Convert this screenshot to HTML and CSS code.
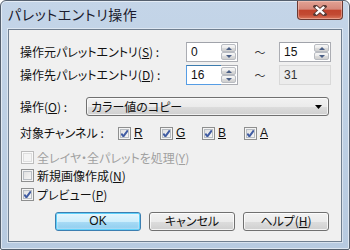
FILE: index.html
```html
<!DOCTYPE html>
<html lang="ja">
<head>
<meta charset="utf-8">
<link rel="stylesheet" href="styles.css">
</head>
<body>
<div class="window">
  <div class="titlebar">
    <span class="title">パレットエントリ操作</span>
    <div class="close">
      <svg width="14" height="11" viewBox="0 0 14 11"><path d="M2.5 1.5 L11.5 9.5 M11.5 1.5 L2.5 9.5" stroke="#5a3b36" stroke-width="4.2" stroke-linecap="square" fill="none"/><path d="M2.8 1.8 L11.2 9.2 M11.2 1.8 L2.8 9.2" stroke="#ffffff" stroke-width="2.4" fill="none"/></svg>
    </div>
  </div>
  <div class="client">
    <div class="range-grid">
      <span class="label">操作元パレットエントリ(<u>S</u>) :</span>
      <div class="spin">
        <div class="edit">0</div>
        <div class="updown"><span class="ud-btn"><i class="tri-up"></i></span><span class="ud-btn"><i class="tri-down"></i></span></div>
      </div>
      <span class="tilde">～</span>
      <div class="spin">
        <div class="edit">15</div>
        <div class="updown"><span class="ud-btn"><i class="tri-up"></i></span><span class="ud-btn"><i class="tri-down"></i></span></div>
      </div>
      <span class="label">操作先パレットエントリ(<u>D</u>) :</span>
      <div class="spin">
        <div class="edit focus">16</div>
        <div class="updown"><span class="ud-btn"><i class="tri-up"></i></span><span class="ud-btn"><i class="tri-down"></i></span></div>
      </div>
      <span class="tilde">～</span>
      <div class="edit readonly">31</div>
    </div>

    <div class="op-row">
      <span class="label">操作(<u>O</u>) :</span>
      <div class="combo">
        <span>カラー値のコピー</span>
        <svg width="7" height="4" viewBox="0 0 7 4"><path d="M0 0 H7 L3.5 4 Z" fill="#000"/></svg>
      </div>
    </div>

    <div class="channel-row">
      <span class="label">対象チャンネル :</span>
      <div class="channels">
        <span class="chk-item"><span class="cb checked"></span><u>R</u></span>
        <span class="chk-item"><span class="cb checked"></span><u>G</u></span>
        <span class="chk-item"><span class="cb checked"></span><u>B</u></span>
        <span class="chk-item"><span class="cb checked"></span><u>A</u></span>
      </div>
    </div>

    <div class="options">
      <div class="opt disabled"><span class="cb"></span><span>全レイヤ・全パレットを処理(<u>Y</u>)</span></div>
      <div class="opt"><span class="cb"></span><span>新規画像作成(<u>N</u>)</span></div>
      <div class="opt"><span class="cb checked"></span><span>プレビュー(<u>P</u>)</span></div>
    </div>

    <div class="buttons">
      <div class="btn default">OK</div>
      <div class="btn"><span>キャンセル</span></div>
      <div class="btn"><span>ヘルプ(<u>H</u>)</span></div>
    </div>
  </div>
</div>
</body>
</html>
```

FILE: styles.css
```css
html, body {
  margin: 0;
  padding: 0;
  background: #ffffff;
}

body {
  font-family: "Noto Sans CJK JP", "Noto Sans", sans-serif;
  font-size: 12px;
  color: #111;
  font-feature-settings: "palt" 1;
}

u {
  text-decoration: underline;
  text-underline-offset: 1px;
}

.window {
  width: 350px;
  height: 250px;
  box-sizing: border-box;
  border: 1px solid #55606e;
  border-radius: 6px 6px 2px 2px;
  background: linear-gradient(#c4d5e8, #bed0e4 45%, #b7cae0);
  box-shadow: inset 0 0 0 1px rgba(255, 255, 255, 0.55);
  display: flex;
  flex-direction: column;
  overflow: hidden;
}

.titlebar {
  height: 28px;
  display: flex;
  align-items: flex-start;
  flex-shrink: 0;
}

.title {
  padding: 4px 0 0 7px;
  font-size: 14px;
  line-height: 19px;
  color: #1b1b2e;
  letter-spacing: 0.6px;
}

.close {
  margin-left: auto;
  margin-right: 6px;
  width: 46px;
  height: 19px;
  box-sizing: border-box;
  border: 1px solid #6b3a33;
  border-top: none;
  border-radius: 0 0 4px 4px;
  background: linear-gradient(#e2a294 0%, #d6887a 45%, #c1432c 52%, #c24a33 75%, #d9765c 100%);
  box-shadow: inset 0 0 0 1px rgba(255, 210, 200, 0.45);
  display: flex;
  align-items: center;
  justify-content: center;
}

.client {
  margin: 0 7px;
  width: 334px;
  height: 213px;
  box-sizing: border-box;
  border: 1px solid #707f90;
  box-shadow: 0 0 0 1px rgba(255, 255, 255, 0.45);
  background: #f0f0f0;
  display: flex;
  flex-direction: column;
}

.label {
  white-space: nowrap;
  line-height: 16px;
}

/* range rows */
.range-grid {
  margin-top: 12px;
  padding-left: 11px;
  display: grid;
  grid-template-columns: 166px 52px 41px 52px;
  grid-auto-rows: 20px;
  row-gap: 3px;
  align-items: center;
}

.spin {
  display: flex;
  height: 20px;
}

.edit {
  box-sizing: border-box;
  height: 20px;
  width: 35px;
  border: 1px solid #abadb3;
  border-top-color: #a0a3aa;
  border-right: none;
  background: #fff;
  padding: 0 0 0 4px;
  line-height: 18px;
  font-family: "Liberation Sans", sans-serif;
  font-size: 12px;
  font-feature-settings: normal;
}

.edit.focus {
  border-color: #569de5;
  border-top-color: #3d7bad;
}

.edit.readonly {
  width: 52px;
  border: 1px solid #d9d9d9;
  background: #ececec;
  color: #333;
}

.updown {
  width: 17px;
  height: 20px;
  box-sizing: border-box;
  border: 1px solid #abadb3;
  border-left: none;
  background: #fff;
  display: flex;
  flex-direction: column;
  padding: 1px 1px 1px 0;
}

.ud-btn {
  flex: 1;
  box-sizing: border-box;
  border: 1px solid #b9bcc2;
  border-radius: 2px;
  background: linear-gradient(#f7f7f7, #ebebeb 50%, #dcdcdc 51%, #d0d0d0);
  display: flex;
  align-items: center;
  justify-content: center;
}

.tri-up, .tri-down {
  width: 0;
  height: 0;
  border-left: 3px solid transparent;
  border-right: 3px solid transparent;
}

.tri-up {
  border-bottom: 3px solid #4a5f86;
}

.tri-down {
  border-top: 3px solid #4a5f86;
}

.tilde {
  text-align: center;
  padding-left: 3px;
  font-size: 11px;
  color: #333;
}

/* operation combo */
.op-row {
  margin-top: 12px;
  padding-left: 11px;
  display: flex;
  align-items: center;
  height: 19px;
}

.op-row .label {
  width: 66px;
}

.combo {
  width: 243px;
  height: 19px;
  box-sizing: border-box;
  border: 1px solid #707070;
  border-radius: 3px;
  background: linear-gradient(#f2f2f2, #ebebeb 50%, #dddddd 51%, #cfcfcf);
  box-shadow: inset 0 0 0 1px rgba(255, 255, 255, 0.7);
  display: flex;
  align-items: center;
  justify-content: space-between;
  padding: 0 6px 0 4px;
  line-height: 16px;
}

/* channels */
.channel-row {
  margin-top: 10px;
  padding-left: 11px;
  display: flex;
  align-items: center;
  height: 14px;
}

.channel-row .label {
  width: 98px;
}

.channels {
  display: flex;
}

.chk-item {
  width: 42px;
  display: flex;
  align-items: center;
  gap: 3px;
  font-family: "Liberation Sans", sans-serif;
  font-size: 12px;
  line-height: 14px;
}

.cb {
  width: 13px;
  height: 13px;
  box-sizing: border-box;
  border: 1px solid #8e8f8f;
  background: linear-gradient(135deg, #dcdcdc, #fafafa);
  box-shadow: inset 0 0 0 1px #f4f4f4, inset 0 0 0 2px #b8bdc3;
  flex-shrink: 0;
}

.cb.checked {
  background-image: url("data:image/svg+xml,%3Csvg xmlns='http://www.w3.org/2000/svg' width='11' height='11' viewBox='0 0 11 11'%3E%3Cpath d='M2.3 5.6 L4.4 8.3 L8.8 2.4' stroke='%23405ca3' stroke-width='2' fill='none'/%3E%3C/svg%3E"), linear-gradient(135deg, #dcdcdc, #fafafa);
  background-repeat: no-repeat;
  background-position: center;
}

/* option checkboxes */
.options {
  margin-top: 8px;
  padding-left: 12px;
  display: flex;
  flex-direction: column;
}

.opt {
  height: 18.5px;
  display: flex;
  align-items: center;
  gap: 3px;
  white-space: nowrap;
}

.opt.disabled {
  color: #a0a0a0;
}

.opt.disabled .cb {
  border-color: #bcbcbc;
  background: #f4f4f4;
  box-shadow: inset 0 0 0 1px #fafafa, inset 0 0 0 2px #dedede;
}

/* buttons */
.buttons {
  margin-top: 8px;
  padding-left: 46px;
  display: flex;
  gap: 8px;
}

.btn {
  width: 86px;
  height: 19px;
  box-sizing: border-box;
  border: 1px solid #707070;
  border-radius: 3px;
  background: linear-gradient(#f2f2f2, #ebebeb 50%, #dddddd 51%, #cfcfcf);
  box-shadow: inset 0 0 0 1px rgba(255, 255, 255, 0.75);
  display: flex;
  align-items: center;
  justify-content: center;
  line-height: 16px;
}

.btn.default {
  border-color: #3c7fb1;
  background: linear-gradient(#e5f5fd, #cdeefc 50%, #a9dcf6 51%, #8ccbee);
  box-shadow: inset 0 0 0 1px #5fd1fb, inset 0 0 2px 1px rgba(255, 255, 255, 0.8);
  font-family: "Liberation Sans", sans-serif;
}
```
